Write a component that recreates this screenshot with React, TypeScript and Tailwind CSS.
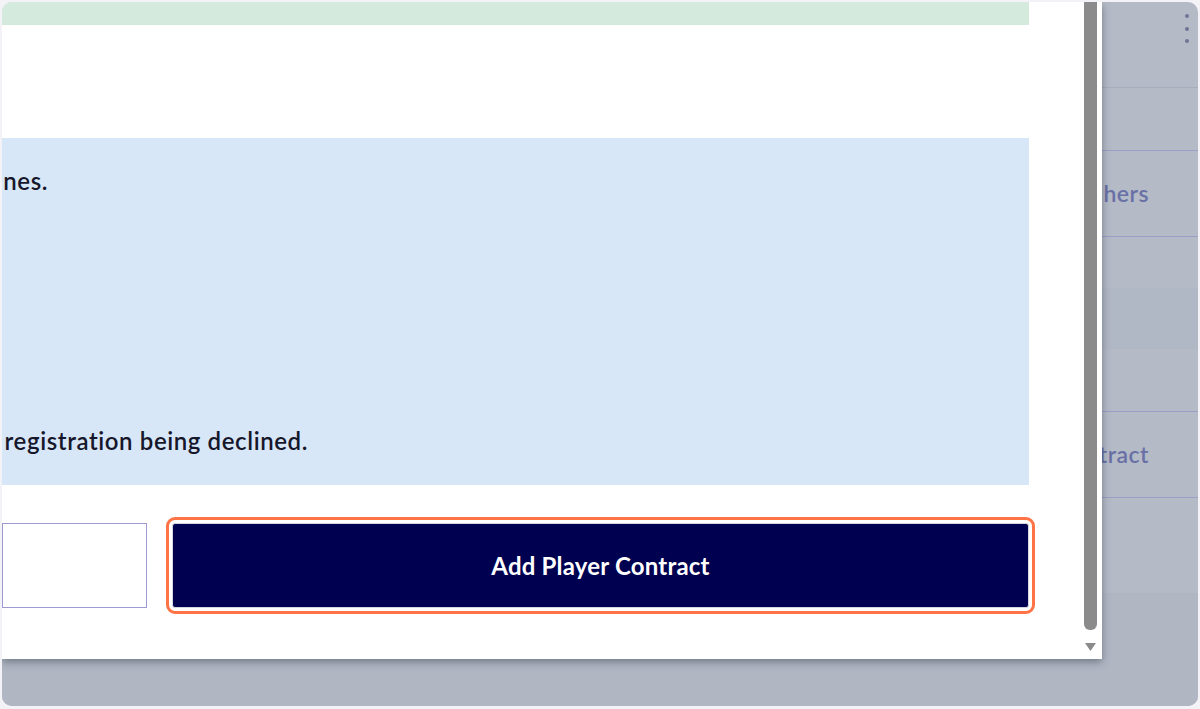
import type { JSX } from 'react'

function BackgroundList(): JSX.Element {
  return (
    <div className="flex h-full w-full flex-col">
      <div className="flex h-[86px] shrink-0 justify-end border-b border-[#a6adbb] pr-[9px] pt-[12px]">
        <div className="flex flex-col gap-[8.5px]">
          <span className="h-[4px] w-[4px] rounded-full bg-[#6e7494]" />
          <span className="h-[4px] w-[4px] rounded-full bg-[#6e7494]" />
          <span className="h-[4px] w-[4px] rounded-full bg-[#6e7494]" />
        </div>
      </div>
      <div className="h-[63px] shrink-0 border-b border-[#9a9fc6]" />
      <div className="flex h-[86px] shrink-0 items-center justify-end border-b border-[#9a9fc6] pr-[49px]">
        <span className="whitespace-nowrap text-[23px] font-semibold tracking-[0.5px] text-[#6970a6]">Vouchers</span>
      </div>
      <div className="flex h-[175px] shrink-0 flex-col border-b border-[#9a9fc6]">
        <div className="h-[51px]" />
        <div className="h-[61px] bg-[#b1b8c5]" />
      </div>
      <div className="flex h-[86px] shrink-0 items-center justify-end border-b border-[#9a9fc6] pr-[49px]">
        <span className="whitespace-nowrap text-[23px] font-semibold tracking-[0.5px] text-[#6970a6]">Add Player Contract</span>
      </div>
      <div className="h-[95px] shrink-0" />
      <div className="flex-1 bg-[#b0b7c3]" />
    </div>
  )
}

function ContractModal(): JSX.Element {
  return (
    <div className="absolute left-0 top-0 flex h-[657px] w-[1100px] overflow-hidden bg-white shadow-[0_3px_8px_rgba(40,45,60,0.45)]">
      <div className="flex min-w-0 flex-1 flex-col pr-[51px] text-[#16172b]">
        <div className="h-[23px] shrink-0 bg-[#d4eadd]" />
        <div className="h-[113px] shrink-0" />
        <div className="flex h-[347px] shrink-0 flex-col bg-[#d8e7f7] pt-[27px] text-[24px] font-semibold leading-[32px] tracking-[0.6px]">
          <p className="flex w-[46px] justify-end whitespace-nowrap">
            Please make sure the contract follows the league registration guidelines.
          </p>
          <p className="mt-[228px] flex w-[306px] justify-end whitespace-nowrap">
            Missing signatures or incomplete details may result in the registration being declined.
          </p>
        </div>
        <div className="mt-[38px] flex gap-[25px]">
          <button
            type="button"
            aria-label="Cancel"
            className="h-[85px] w-[145px] shrink-0 border border-[#9e9bd3] bg-white"
          />
          <button
            type="button"
            className="h-[85px] flex-1 rounded-[3px] border border-[#d6d6e0] bg-[#000050] text-[24px] font-bold tracking-[0.2px] text-white outline-[3px] outline-offset-[3px] outline-[#ff7346] outline-solid"
          >
            Add Player Contract
          </button>
        </div>
      </div>
      <div className="flex w-[22px] shrink-0 flex-col items-start pl-[4px]">
        <div className="h-[628px] w-[13px] rounded-b-[6px] bg-[#8b8b8b]" />
        <svg width="13" height="10" viewBox="0 0 13 10" className="mt-[12px]">
          <polygon points="1,1 12,1 6.5,9" fill="#8b8b8b" />
        </svg>
      </div>
    </div>
  )
}

export default function App(): JSX.Element {
  return (
    <div className="h-[709px] w-[1200px] bg-[#f2f2f7] p-[2px] pb-[3px] font-['Lato',sans-serif]">
      <div className="relative h-full w-full overflow-hidden rounded-[10px] bg-[#b4bbc7]">
        <BackgroundList />
        <ContractModal />
      </div>
    </div>
  )
}
